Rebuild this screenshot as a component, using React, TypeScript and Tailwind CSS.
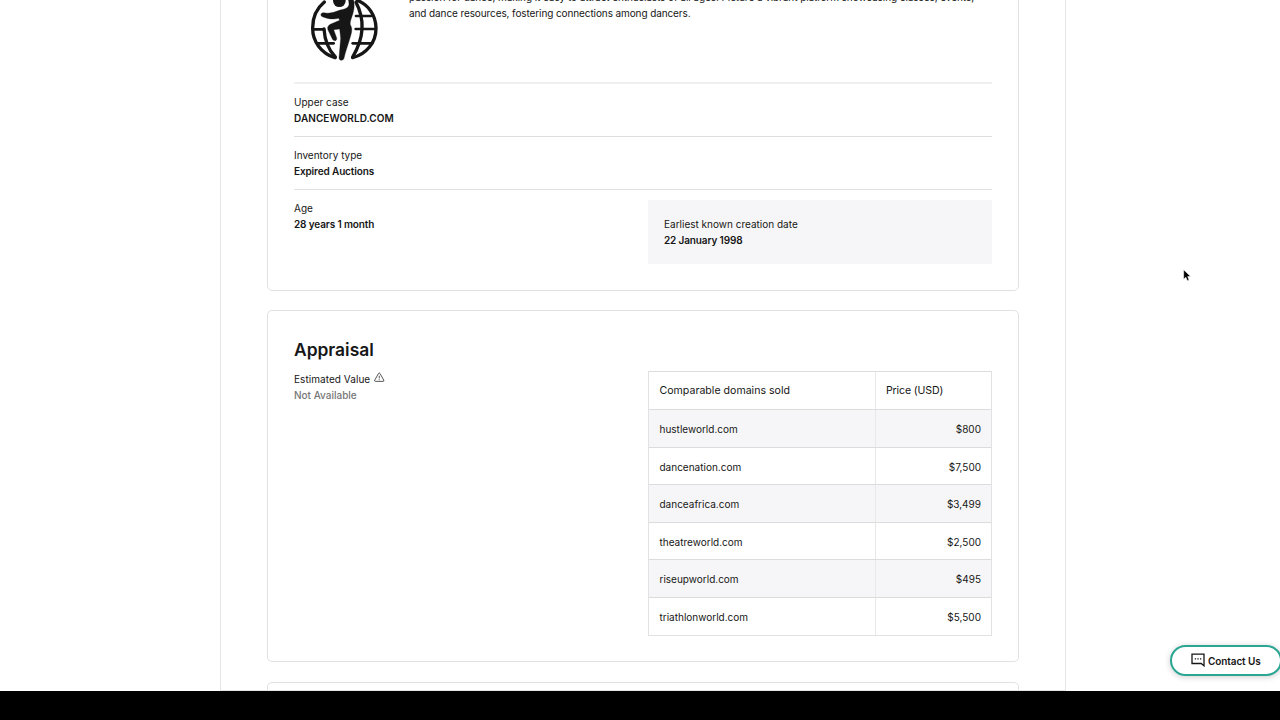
import React from "react";

const sales = [
  { domain: "hustleworld.com", price: "$800" },
  { domain: "dancenation.com", price: "$7,500" },
  { domain: "danceafrica.com", price: "$3,499" },
  { domain: "theatreworld.com", price: "$2,500" },
  { domain: "riseupworld.com", price: "$495" },
  { domain: "triathlonworld.com", price: "$5,500" },
];

const Field = ({ label, value }: { label: string; value: React.ReactNode }) => (
  <div>
    <p>{label}</p>
    <p className="font-semibold tracking-[-0.13px]">{value}</p>
  </div>
);

const GlobeLogo = () => (
  <svg
    viewBox="0 -60 270 270"
    className="-ml-[20.5px] -mt-2 size-[90px] shrink-0"
    fill="none"
    stroke="#161616"
    strokeLinecap="round"
    strokeLinejoin="round"
  >
    <g strokeWidth="10">
      <path d="M105 170C65 158 37 122 38 80C38 50 50 22 73 3" />
      <path d="M172 -2C206 12 227 43 228 80C229 125 198 160 158 170" />
      <path d="M168 4C192 50 196 105 158 168" />
      <path d="M72 84C74 115 84 145 106 168" />
    </g>
    <g strokeWidth="8">
      <path d="M42 85H72" />
      <path d="M53 127H101" />
      <path d="M168 45H213" />
      <path d="M167 84H226" />
      <path d="M158 127H216" />
    </g>
    <circle cx="118" cy="-1" r="19" fill="#161616" stroke="none" />
    <path
      d="M152 -30C160 -12 164 4 162 22C159 46 149 58 151 72C160 84 153 100 148 118C142 138 136 154 132 172C130 180 118 180 117 171L122 112L119 84L101 86L109 108C114 119 102 123 97 114L84 87C81 79 84 74 91 70L119 58L116 52C100 56 84 54 67 47C59 43 63 34 71 35C88 39 103 34 118 28C132 24 145 24 147 10C147 0 143 -10 140 -26Z"
      fill="#161616"
      strokeWidth="1"
    />
  </svg>
);

const App = () => {
  return (
    <div className="relative flex h-[720px] w-[1280px] flex-col overflow-hidden bg-white font-['Inter',sans-serif] text-[10px] leading-4 text-[#161616]">
      <main className="ml-[220px] h-[691px] w-[846px] overflow-hidden border-x border-b border-[#e6e6e6] px-[46px]">
        <section className="-mt-[30px] h-[321px] w-[752px] rounded-[5px] border border-[#e2e2e2] px-[26px]">
          <div className="flex h-[111px] pt-[18px]">
            <div className="flex w-[115px] shrink-0 pl-[26px]">
              <GlobeLogo />
            </div>
            <p className="whitespace-nowrap tracking-[-0.1px]">
              <span className="tracking-[-0.07px]">
                passion for dance, making it easy to attract enthusiasts of all ages. Picture a vibrant platform showcasing classes, events,
              </span>
              <br />
              and dance resources, fostering connections among dancers.
            </p>
          </div>
          <div className="h-[54px] border-t-2 border-[#efefef] pt-[10px]">
            <Field label="Upper case" value={<span className="tracking-[0.07px]">DANCEWORLD.COM</span>} />
          </div>
          <div className="h-[53px] border-t border-[#dedede] pt-[10px]">
            <Field label="Inventory type" value="Expired Auctions" />
          </div>
          <div className="flex justify-between border-t border-[#e2e2e2] pt-[10px]">
            <Field label="Age" value="28 years 1 month" />
            <div className="h-16 w-[344px] bg-[#f6f6f8] p-4">
              <Field label="Earliest known creation date" value="22 January 1998" />
            </div>
          </div>
        </section>

        <section className="mt-[19px] flex h-[352px] w-[752px] justify-between rounded-[5px] border border-[#e2e2e2] px-[26px]">
          <div className="pt-[27px]">
            <h2 className="text-[17.4px] font-semibold leading-6">Appraisal</h2>
            <div className="mt-[9px] flex gap-1">
              <span className="tracking-[0.05px]">Estimated Value</span>
              <svg
                viewBox="0 0 24 24"
                className="mt-px size-[10.5px]"
                fill="none"
                stroke="#333"
                strokeWidth="1.9"
                strokeLinejoin="round"
              >
                <path d="M10.4 3.2 1.7 18.6a1.9 1.9 0 0 0 1.6 2.8h17.4a1.9 1.9 0 0 0 1.6-2.8L13.6 3.2a1.9 1.9 0 0 0-3.2 0Z" />
                <path d="M12 8.5v6M12 16.5v2" />
              </svg>
            </div>
            <p className="font-medium text-[#767676]">Not Available</p>
          </div>

          <div className="mt-[60px] h-[265px] w-[344px] border-x border-b border-[#e2e2e2]">
            <div className="flex h-[38px] items-center border-t border-[#dcdcdc] text-[10.6px]">
              <span className="flex h-full w-[226px] items-center pl-[10.5px] pt-px">Comparable domains sold</span>
              <span className="flex h-full flex-1 items-center border-l border-[#e8e8e8] pl-[10px] pt-px tracking-[-0.15px]">
                Price (USD)
              </span>
            </div>
            {sales.map(({ domain, price }) => (
              <div
                key={domain}
                className="flex h-[37.6px] items-center border-t border-[#dcdcdc] odd:bg-white even:bg-[#f6f6f8]"
              >
                <span className="flex h-full w-[226px] items-center pl-[10.5px] pt-[1.4px]">{domain}</span>
                <span className="flex h-full flex-1 items-center justify-end border-l border-[#e8e8e8] pr-[10px] pt-[1.4px]">
                  {price}
                </span>
              </div>
            ))}
          </div>
        </section>

        <section className="mt-5 h-20 w-[752px] rounded-[5px] border border-[#e2e2e2]" />
      </main>

      <div className="flex-1 bg-black" />

      <button className="absolute left-[1170px] top-[645px] flex h-[31px] w-[112px] items-center gap-1 rounded-full border-2 border-[#2aa693] bg-white pl-[19px] font-semibold shadow-[0_1px_6px_rgba(0,0,0,0.2)]">
        <svg viewBox="0 0 14 14" className="-mt-px size-[14px]" fill="none" stroke="#161616" strokeWidth="1.3">
          <path d="M1 1.2h12v11.6L10.2 10.5H1Z" />
          <path d="M3.8 5.8h1.3M6.4 5.8h1.3M9 5.8h1.3" />
        </svg>
        <span className="-ml-px tracking-[-0.1px]">Contact Us</span>
      </button>

      <svg viewBox="0 0 12 19" className="absolute left-[1183px] top-[269px] h-[13px] w-[8px]">
        <path
          d="M1 1v14l3.3-3 2.2 5.2 2.6-1.1L7 11h4.4Z"
          fill="#000"
          stroke="#fff"
          strokeWidth="0.8"
        />
      </svg>
    </div>
  );
};

export default App;
